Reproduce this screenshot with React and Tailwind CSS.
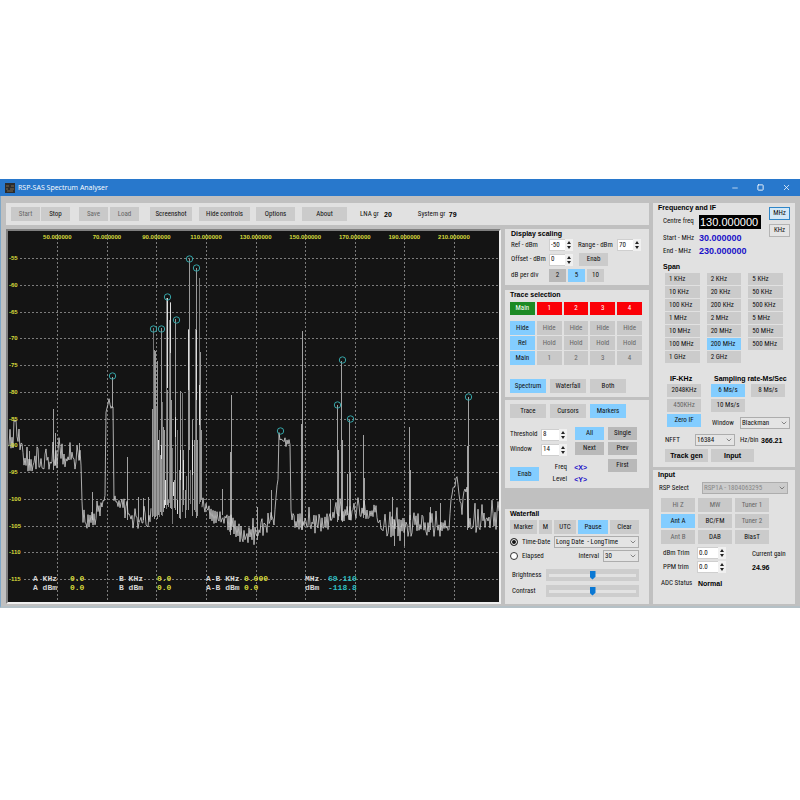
import React, { useMemo } from 'react'
import { ChevronDown, Minus, Square, X } from 'lucide-react'

// ---- spectrum trace -------------------------------------------------------

const freqs = [50, 70, 90, 110, 130, 150, 170, 190, 210]
const levels = [-55, -60, -65, -70, -75, -80, -85, -90, -95, -100, -105, -110, -115]
const fx = (mhz) => 57.3 + (mhz - 50) * 2.479
const ly = (dbm) => 258 + (-55 - dbm) * 5.35

// noise floor, [x, y, jitter]
const floor = [
  [8, 435, 12], [11, 440, 12], [18, 440, 10], [21, 446, 5], [24, 460, 10], [30, 466, 12], [38, 468, 11], [46, 463, 9],
  [56, 461, 12], [66, 459, 10], [81, 460, 10], [82, 500, 2], [83, 520, 9], [88, 519, 10], [95, 517, 8], [100, 511, 7],
  [105, 497, 4], [106, 412, 2], [108, 404, 3], [109, 399, 2], [111, 407, 2], [113, 408, 2], [114, 498, 5],
  [118, 505, 7], [125, 513, 7], [135, 524, 9], [142, 523, 9], [149, 519, 8], [152, 508, 6], [160, 508, 8],
  [190, 508, 8], [201, 500, 7], [208, 510, 8], [215, 517, 10], [225, 519, 10], [235, 529, 11], [245, 534, 10],
  [255, 534, 11], [262, 532, 9], [268, 526, 8], [274, 519, 6], [276, 495, 4], [278, 478, 3], [279, 436, 2],
  [281, 440, 4], [285, 440, 9], [290, 443, 4], [291, 514, 3], [295, 521, 9], [305, 526, 10], [318, 526, 10],
  [328, 522, 9], [333, 513, 8], [345, 516, 9], [355, 511, 8], [365, 513, 7], [376, 510, 6], [380, 522, 9],
  [390, 527, 12], [402, 530, 12], [412, 524, 12], [422, 525, 11], [435, 529, 10], [449, 526, 6], [451, 500, 3],
  [454, 484, 5], [457, 480, 3], [459, 492, 4], [462, 512, 3], [464, 490, 4], [467, 490, 3], [469, 526, 6],
  [474, 523, 11], [485, 520, 10], [499, 520, 10],
]

// carriers, [x, top, foot]
const carriers = [
  [53, 409, 470], [29, 451, 465], [79, 443, 460], [55, 433, 465], [112, 377, 408], [127, 457, 520], [138, 497, 522],
  [92, 492, 520], [231, 395, 530], [230, 452, 535], [302, 331, 530], [301, 424, 530], [143, 498, 520], [148, 497, 520],
  [337, 405, 522], [338, 450, 520], [341, 361, 520], [342, 440, 522], [349, 420, 520], [350, 472, 520], [347, 474, 515],
  [363, 435, 518], [364, 478, 515], [409, 427, 524], [410, 470, 520], [468, 397, 528], [467, 446, 530], [222, 489, 515],
  [257, 507, 540], [271, 490, 520], [330, 499, 520], [392, 497, 524], [430, 507, 530], [440, 503, 530], [394, 520, 546],
  [404, 520, 546],
]

const fmBand = [
  [152, 409, 517], [153, 328, 516], [154, 350, 519], [155, 351, 517], [156, 407, 516], [157, 361, 519], [158, 440, 515],
  [159, 430, 517], [160, 455, 512], [161, 328, 515], [162, 402, 516], [163, 427, 512], [164, 430, 505],
  [166, 298, 509], [167, 390, 505], [168, 500, 507], [169, 320, 503], [170, 302, 508], [171, 400, 509], [172, 448, 524], [174, 480, 508],
  [175, 319, 510], [177, 430, 514], [179, 470, 518], [180, 391, 519], [182, 393, 512], [183, 450, 505], [185, 490, 518],
  [186, 476, 510], [188, 329, 510], [189, 259, 450], [190, 470, 504], [192, 420, 516], [194, 440, 510], [195, 329, 512],
  [196, 268, 518], [197, 440, 516], [199, 278, 504], [200, 352, 502], [201, 430, 500],
]

const peaks = [
  [112, 376], [153, 329], [161, 329], [167, 297], [176, 320], [189, 259], [196, 268],
  [280, 431], [337, 405], [342, 360], [350, 419], [468, 397],
]

function buildTrace() {
  let seed = 7
  const rand = () => {
    seed = (seed * 16807) % 2147483647
    return seed / 2147483647
  }
  const pts = []
  let k = 0
  let side = 1
  for (let x = 8; x <= 499; x += 1) {
    if (x >= 152 && x <= 201) continue
    while (k < floor.length - 2 && floor[k + 1][0] <= x) k++
    const [x0, y0, j0] = floor[k]
    const [x1, y1, j1] = floor[k + 1]
    const t = (x - x0) / (x1 - x0)
    const jit = j0 + (j1 - j0) * t
    // mostly swings about the floor, with the odd taller burst
    if (rand() > 0.25) side = -side
    let dy = side * rand() * jit
    if (rand() > 0.9) dy = -jit * (1 + rand())
    pts.push(`${pts.length && x !== 202 ? 'L' : 'M'}${x} ${(y0 + (y1 - y0) * t + dy).toFixed(1)}`)
  }
  return pts.join(' ')
}

const readouts = [
  [33, 'A KHz', 'A dBm', 70, '0.0', '0.0'],
  [119, 'B KHz', 'B dBm', 157, '0.0', '0.0'],
  [206, 'A-B KHz', 'A-B dBm', 244, '0.000', '0.0'],
  [305, 'MHz', 'dBm', 328, '69.110', '-118.8'],
]

function Spectrum() {
  const trace = useMemo(buildTrace, [])
  const spikes = (list) => list.map(([x, top, foot]) => `M${x + 0.5} ${top}V${foot}`).join('')
  return (
    <svg viewBox="8 231 491 371" className="block w-full bg-[#141414]" role="img" aria-label="Spectrum">
      <g stroke="#7c7c7c" strokeWidth="1" strokeDasharray="2 2">
        {freqs.map((f) => <path key={f} d={`M${Math.round(fx(f)) + 0.5} 234V602`} />)}
        {levels.map((l) => <path key={l} d={`M${l > -100 ? 20 : 24} ${Math.round(ly(l)) + 0.5}H499`} />)}
      </g>
      <path d={spikes(carriers)} stroke="#a2a2a2" />
      <path d={spikes(fmBand.filter((_, i) => i % 3 !== 1))} stroke="#9a9a9a" />
      <path d={spikes(fmBand.filter((_, i) => i % 3 === 1))} stroke="#777" />
      <path
        d="M158.500 440v10M161.500 445v14M167.500 298v90M170.500 303v50M175.500 417v20M180.500 450v30M165.500 480v25M173.500 482v14M183.500 460v30M188.500 330v60M192.500 440v35M196.500 330v70M199.500 385v40M164.500 500v8M177.500 500v14"
        stroke="#dedede"
      />
      <path d={trace} fill="none" stroke="#d4d4d4" strokeWidth="0.8" />
      <g fill="none" stroke="#35a5a8" strokeWidth="1">
        {peaks.map(([x, y]) => <circle key={x} cx={x + 0.5} cy={y} r="3.2" />)}
      </g>
      <g fill="#d8dc3c" className="font-['Liberation_Sans',sans-serif] text-[6px] font-bold">
        {freqs.map((f) => <text key={f} x={fx(f)} y="239" textAnchor="middle">{f.toFixed(6)}</text>)}
        {levels.map((l) => <text key={l} x="9" y={ly(l) + 2}>{l}</text>)}
      </g>
      <g className="whitespace-pre font-['Liberation_Mono',monospace] text-[8px] font-bold">
        {readouts.map(([x, a, b, vx, va, vb], i) => (
          <g key={i}>
            <text x={x} y="581" fill="#d6d6d6">{a}</text>
            <text x={x} y="590" fill="#d6d6d6">{b}</text>
            <text x={vx} y="581" fill={i === 3 ? '#2fc0c4' : '#d8dc3c'}>{va}</text>
            <text x={vx} y="590" fill={i === 3 ? '#2fc0c4' : '#d8dc3c'}>{vb}</text>
          </g>
        ))}
      </g>
    </svg>
  )
}

// ---- controls -------------------------------------------------------------

const tones = {
  plain: 'bg-[#cbcbcb] text-[#111]',
  dark: 'bg-[#b9b9b9] text-[#111]',
  dim: 'bg-[#c9c9c9] text-[#666]',
  on: 'bg-[#83cdff] text-[#111]',
  green: 'bg-[#1d8a24] text-white',
  red: 'bg-[#fb0007] text-white',
}

function Btn({ tone = 'plain', className = 'h-[13px] w-[29px]', children }) {
  return (
    <button type="button" className={`flex shrink-0 items-center justify-center ${tones[tone]} ${className}`}>
      {children}
    </button>
  )
}

function Spin({ value, label, className = 'w-6' }) {
  return (
    <span className={`flex h-3 shrink-0 bg-white ring-1 ring-[#cfcfcf] ring-inset ${className}`}>
      <input aria-label={label} defaultValue={value} className="w-0 min-w-0 flex-1 bg-transparent pl-[2px]" />
      <span className="flex w-2 flex-col items-center justify-center gap-[2px] bg-[#f0f0f0]">
        <button type="button" aria-label={`${label} up`}>
          <svg viewBox="0 0 4 3" className="block h-[3px] w-1"><path d="M0 3L2 0L4 3Z" fill="#222" /></svg>
        </button>
        <button type="button" aria-label={`${label} down`}>
          <svg viewBox="0 0 4 3" className="block h-[3px] w-1"><path d="M0 0L2 3L4 0Z" fill="#222" /></svg>
        </button>
      </span>
    </span>
  )
}

function Pick({ value, label, className, disabled }) {
  return (
    <span className={`relative flex h-3 shrink-0 ${className}`}>
      <select
        aria-label={label}
        disabled={disabled}
        className={`w-full appearance-none border border-[#adadad] pl-px ${disabled ? 'bg-[#cccccc] text-[#888]' : 'bg-[#e4e4e4]'}`}
      >
        <option>{value}</option>
      </select>
      <ChevronDown className="pointer-events-none absolute top-[2px] right-[2px] size-2 text-[#555]" strokeWidth={2} />
    </span>
  )
}

function Slider({ label }) {
  return (
    <label className="flex h-4 items-center">
      <span className="w-[34px]">{label}</span>
      <span className="flex h-3 flex-1 items-center bg-[#cdcdcd] px-[3px]">
        <input
          type="range"
          defaultValue="50"
          className="h-[3px] w-full appearance-none bg-[#e2e2e2] [&::-webkit-slider-thumb]:h-[9px] [&::-webkit-slider-thumb]:w-[6px] [&::-webkit-slider-thumb]:appearance-none [&::-webkit-slider-thumb]:bg-[#0a78d4] [&::-webkit-slider-thumb]:[clip-path:polygon(0_0,100%_0,100%_70%,50%_100%,0_70%)]"
        />
      </span>
    </label>
  )
}

const Title = ({ children }) => (
  <h2 className="font-['Liberation_Sans',sans-serif] text-[7px] leading-[9px] font-bold text-black">{children}</h2>
)

const Bold = ({ className = 'text-black', children }) => (
  <span className={`font-['Liberation_Sans',sans-serif] font-bold ${className}`}>{children}</span>
)

function TitleBar() {
  return (
    <header className="flex h-[17px] items-center bg-[#2878cc] pl-[5px] text-white">
      <svg viewBox="0 0 10 10" className="mr-[3px] size-[10px]">
        <rect width="10" height="10" fill="#2c2c2c" />
        <path d="M1 3h3M6 3h3M1 6h2M5 6h4M2 8h6" stroke="#7a6a50" />
      </svg>
      <h1 className="flex-1 font-['Open_Sans',sans-serif] text-[7px]">RSP-SAS Spectrum Analyser</h1>
      <div className="flex items-center gap-[18px] pr-[9px]">
        <button type="button" aria-label="Minimise"><Minus className="size-2" /></button>
        <button type="button" aria-label="Maximise"><Square className="size-[7px]" strokeWidth={3} /></button>
        <button type="button" aria-label="Close"><X className="size-[9px]" strokeWidth={2} /></button>
      </div>
    </header>
  )
}

function Toolbar() {
  return (
    <div className="flex h-[22px] items-center bg-[#e1e1e1] pl-[5px]">
      <Btn tone="dim" className="h-[14px] w-[29px]">Start</Btn>
      <Btn className="ml-px h-[14px] w-[29px]">Stop</Btn>
      <Btn tone="dim" className="ml-[9px] h-[14px] w-[29px]">Save</Btn>
      <Btn tone="dim" className="ml-[2px] h-[14px] w-[29px]">Load</Btn>
      <Btn className="ml-[11px] h-[14px] w-[42px]">Screenshot</Btn>
      <Btn className="ml-[7px] h-[14px] w-[51px]">Hide controls</Btn>
      <Btn className="ml-[6px] h-[14px] w-[39px]">Options</Btn>
      <Btn className="ml-[7px] h-[14px] w-[45px]">About</Btn>
      <span className="ml-[13px] w-6">LNA gr</span>
      <Bold>20</Bold>
      <span className="ml-[26px] w-[31px]">System gr</span>
      <Bold>79</Bold>
    </div>
  )
}

function DisplayScaling() {
  return (
    <section className="h-14 bg-[#e1e1e1] pl-[6px]">
      <Title>Display scaling</Title>
      <div className="flex h-[14px] items-center">
        <span className="w-[38px]">Ref - dBm</span>
        <Spin label="Ref" value="-50" />
        <span className="ml-[5px] w-[39px]">Range - dBm</span>
        <Spin label="Range" value="70" />
      </div>
      <div className="flex h-[15px] items-center">
        <span className="w-[38px]">Offset - dBm</span>
        <Spin label="Offset" value="0" />
        <Btn className="ml-[6px] h-[13px] w-[29px]">Enab</Btn>
      </div>
      <div className="flex h-[17px] items-center gap-[2px]">
        <span className="w-9">dB per div</span>
        <Btn tone="dark" className="h-[13px] w-[17px]">2</Btn>
        <Btn tone="on" className="h-[13px] w-[17px]">5</Btn>
        <Btn className="h-[13px] w-[17px]">10</Btn>
      </div>
    </section>
  )
}

const traceRows = [
  ['Hide', 'Hide', 'Hide', 'Hide', 'Hide'],
  ['Rel', 'Hold', 'Hold', 'Hold', 'Hold'],
  ['Main', '1', '2', '3', '4'],
]

function TraceSelection() {
  return (
    <section className="mt-[5px] h-[107px] bg-[#e1e1e1] pr-[7px] pl-[5px]">
      <Title>Trace selection</Title>
      <div className="mt-[3px] grid grid-cols-5 gap-[2px]">
        {['Main', '1', '2', '3', '4'].map((t, i) => (
          <Btn key={t} tone={i ? 'red' : 'green'} className="h-[13px]">{t}</Btn>
        ))}
      </div>
      <div className="mt-[6px] grid grid-cols-5 gap-x-[2px] gap-y-px">
        {traceRows.map((row) => row.map((t, i) => (
          <Btn key={row[0] + i} tone={i ? 'dim' : 'on'} className="h-[14px]">{t}</Btn>
        )))}
      </div>
      <div className="mt-[14px] flex gap-1">
        <Btn tone="on" className="h-[14px] w-9">Spectrum</Btn>
        <Btn className="h-[14px] w-9">Waterfall</Btn>
        <Btn className="h-[14px] w-9">Both</Btn>
      </div>
    </section>
  )
}

function Markers() {
  return (
    <section className="mt-[3px] h-[88px] bg-[#e1e1e1] pt-[4px] pl-[5px]">
      <div className="flex gap-1">
        <Btn className="h-[14px] w-9">Trace</Btn>
        <Btn className="h-[14px] w-9">Cursors</Btn>
        <Btn tone="on" className="h-[14px] w-9">Markers</Btn>
      </div>
      <div className="mt-[9px] flex">
        <div className="w-[65px]">
          <div className="flex h-[15px] items-center"><span className="w-[31px]">Threshold</span><Spin label="Threshold" value="8" className="w-[26px]" /></div>
          <div className="flex h-[15px] items-center"><span className="w-[31px]">Window</span><Spin label="Window" value="14" className="w-[26px]" /></div>
          <div className="mt-[5px] flex items-center">
            <Btn tone="on" className="h-[14px] w-[29px]">Enab</Btn>
            <dl className="ml-3 grid shrink-0 grid-cols-[16px_14px] gap-x-[6px] text-right leading-[11px]">
              <dt>Freq</dt><dd><Bold className="text-[#1a10c8]">&lt;X&gt;</Bold></dd>
              <dt>Level</dt><dd><Bold className="text-[#1a10c8]">&lt;Y&gt;</Bold></dd>
            </dl>
          </div>
        </div>
        <div className="grid h-fit grid-cols-[29px_29px] gap-x-1 gap-y-[2px]">
          <Btn tone="on">All</Btn>
          <Btn tone="dark">Single</Btn>
          <Btn tone="dark">Next</Btn>
          <Btn tone="dark">Prev</Btn>
          <span />
          <Btn tone="dark" className="mt-[2px] h-[13px] w-[29px]">First</Btn>
        </div>
      </div>
    </section>
  )
}

function Radio({ label, checked }) {
  return (
    <label className="flex w-[44px] shrink-0 items-center gap-1">
      <input
        type="radio"
        name="stamp"
        defaultChecked={checked}
        className="size-2 appearance-none rounded-full border border-[#333] bg-white checked:bg-[#111] checked:shadow-[inset_0_0_0_1px_white]"
      />
      {label}
    </label>
  )
}

function Waterfall() {
  return (
    <section className="mt-[21px] h-[95px] bg-[#e1e1e1] pr-[10px] pl-[5px]">
      <Title>Waterfall</Title>
      <div className="mt-[2px] flex gap-[2px]">
        <Btn className="h-[14px] w-[27px]">Marker</Btn>
        <Btn className="h-[14px] w-[13px]">M</Btn>
        <Btn className="h-[14px] w-[22px]">UTC</Btn>
        <Btn tone="on" className="h-[14px] w-[30px]">Pause</Btn>
        <Btn className="h-[14px] flex-1">Clear</Btn>
      </div>
      <div className="mt-px flex h-[14px] items-center">
        <Radio label="Time-Date" checked />
        <Pick label="Date format" value={'Long Date\u00a0 - LongTime'} className="flex-1" />
      </div>
      <div className="flex h-[14px] items-center">
        <Radio label="Elapsed" />
        <span className="flex-1 pr-1 text-right">Interval</span>
        <Pick label="Interval" value="30" className="w-9" />
      </div>
      <div className="mt-[4px] pl-[2px]">
        <Slider label="Brightness" />
        <Slider label="Contrast" />
      </div>
    </section>
  )
}

const spans = [
  '1 KHz', '2 KHz', '5 KHz', '10 KHz', '20 KHz', '50 KHz', '100 KHz', '200 KHz', '500 KHz', '1 MHz', '2 MHz', '5 MHz',
  '10 MHz', '20 MHz', '50 MHz', '100 MHz', '200 MHz', '500 MHz', '1 GHz', '2 GHz',
]

function FrequencyPanel() {
  return (
    <section className="h-[264px] bg-[#e1e1e1] pl-[5px]">
      <div className="flex">
        <div className="flex-1">
          <Title>Frequency and IF</Title>
          <label className="mt-[2px] flex h-[15px] items-center pl-[5px]">
            <span className="w-9">Centre freq</span>
            <input defaultValue="130.000000" className="h-[14px] w-[62px] bg-black pl-px font-['Liberation_Sans',sans-serif] text-[11px] text-white" />
          </label>
          <p className="mt-[3px] flex h-[13px] items-center pl-[5px]">
            <span className="w-9">Start - MHz</span><Bold className="text-[9px] text-[#1a10c8]">30.000000</Bold>
          </p>
          <p className="flex h-[13px] items-center pl-[5px]">
            <span className="w-9">End - MHz</span><Bold className="text-[9px] text-[#1a10c8]">230.000000</Bold>
          </p>
        </div>
        <div className="flex flex-col gap-1 pt-1 pr-[5px]">
          <button type="button" className="h-[13px] w-[21px] border border-[#2f86c8] bg-[#d3e8f7]">MHz</button>
          <button type="button" className="h-[13px] w-[21px] border border-[#b4b4b4] bg-[#e4e4e4]">KHz</button>
        </div>
      </div>
      <div className="mt-1 pl-[5px]">
        <Title>Span</Title>
        <div className="mt-[2px] grid w-[120px] grid-cols-3 gap-x-[7px] gap-y-px pl-[2px]">
          {spans.map((s) => (
            <button
              key={s}
              type="button"
              className={`h-3 pl-1 text-left ${s === '200 MHz' ? 'bg-[#83cdff]' : 'bg-[#cbcbcb]'}`}
            >
              {s}
            </button>
          ))}
        </div>
      </div>
      <div className="mt-[11px] flex pl-[9px]">
        <div className="w-11">
          <Title><span className="pl-[3px]">IF-KHz</span></Title>
          <div className="mt-px flex flex-col gap-[2px]">
            <Btn className="h-[13px] w-[34px]">2048KHz</Btn>
            <Btn tone="dim" className="h-[13px] w-[34px]">450KHz</Btn>
            <Btn tone="on" className="h-[13px] w-[34px]">Zero IF</Btn>
          </div>
        </div>
        <div>
          <Title><span className="pl-[3px]">Sampling rate-Ms/Sec</span></Title>
          <div className="mt-px grid w-[74px] grid-cols-[34px_34px] gap-x-[6px] gap-y-[2px]">
            <Btn tone="on" className="h-[13px]">6 Ms/s</Btn>
            <Btn className="h-[13px]">8 Ms/s</Btn>
            <Btn className="h-[13px]">10 Ms/s</Btn>
          </div>
          <div className="mt-[5px] flex items-center pl-px">
            <span className="w-[28px]">Window</span>
            <Pick label="Window" value="Blackman" className="w-[50px]" />
          </div>
        </div>
      </div>
      <div className="mt-[5px] flex items-center pl-[7px]">
        <span className="w-[30px]">NFFT</span>
        <Pick label="NFFT" value="16384" className="w-10" />
        <span className="w-[26px] pl-[5px]">Hz/bin</span>
        <Bold>366.21</Bold>
      </div>
      <div className="mt-[3px] flex gap-[3px] pl-[7px]">
        <Btn className="h-[13px] w-[43px]"><Bold>Track gen</Bold></Btn>
        <Btn className="h-[13px] w-[43px]"><Bold>Input</Bold></Btn>
      </div>
    </section>
  )
}

const inputs = [
  ['Hi Z', 'dim'], ['MW', 'dim'], ['Tuner 1', 'dim'],
  ['Ant A', 'on'], ['BC/FM', 'plain'], ['Tuner 2', 'dim'],
  ['Ant B', 'dim'], ['DAB', 'plain'], ['BiasT', 'plain'],
]

function InputPanel() {
  return (
    <section className="mt-[3px] h-[134px] bg-[#e1e1e1] pl-[5px]">
      <Title>Input</Title>
      <div className="mt-[2px] flex h-[14px] items-center">
        <span className="w-11 pl-px">RSP Select</span>
        <Pick label="RSP Select" value="RSP1A - 1804063295" className="w-[86px]" disabled />
      </div>
      <div className="mt-[3px] grid w-[112px] grid-cols-[34px_34px_34px] gap-x-[3px] gap-y-[2px] pl-[3px]">
        {inputs.map(([name, tone]) => <Btn key={name} tone={tone} className="h-[14px]">{name}</Btn>)}
      </div>
      <div className="mt-[3px] flex pl-[5px]">
        <div className="flex w-[89px] flex-col gap-[2px]">
          <div className="flex items-center"><span className="w-[34px]">dBm Trim</span><Spin label="dBm Trim" value="0.0" className="w-[29px]" /></div>
          <div className="flex items-center"><span className="w-[34px]">PPM trim</span><Spin label="PPM trim" value="0.0" className="w-[29px]" /></div>
        </div>
        <div className="leading-[14px]">
          <p>Current gain</p>
          <p><Bold>24.96</Bold></p>
        </div>
      </div>
      <p className="mt-[4px] flex pl-[3px]"><span className="w-[37px]">ADC Status</span><Bold>Normal</Bold></p>
    </section>
  )
}

export default function App() {
  return (
    <div className="min-h-screen bg-white pt-[179px]">
      <main className="bg-[#c0c0c0] font-['Roboto_Condensed','Roboto',sans-serif] text-[7px] leading-[9px] whitespace-nowrap text-[#111]">
        <TitleBar />
        <div className="flex gap-1 border-b-2 border-l border-b-[#b4c0c6] border-l-[#7fa8c8] pt-[7px] pr-[5px] pb-[2px] pl-[5px]">
          <div className="min-w-0 flex-1">
            <Toolbar />
            <div className="mt-1 flex gap-1">
              <div className="h-fit min-w-0 flex-1 border-2 border-t-[#808080] border-r-[#eee] border-b-[#eee] border-l-[#808080]">
                <Spectrum />
              </div>
              <div className="w-36 shrink-0">
                <DisplayScaling />
                <TraceSelection />
                <Markers />
                <Waterfall />
              </div>
            </div>
          </div>
          <div className="w-[142px] shrink-0">
            <FrequencyPanel />
            <InputPanel />
          </div>
        </div>
      </main>
    </div>
  )
}
